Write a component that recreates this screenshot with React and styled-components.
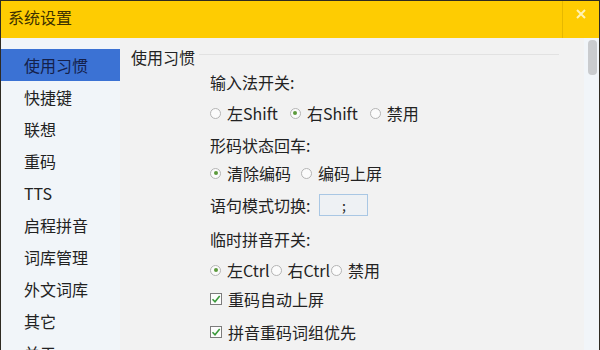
import React from 'react';
import styled, { createGlobalStyle } from 'styled-components';

const Global = createGlobalStyle`
  html, body {
    margin: 0;
    padding: 0;
    overflow: hidden;
    background: #f2f2f2;
  }
  * { box-sizing: border-box; }
`;

const Window = styled.div`
  width: 600px;
  height: 350px;
  display: flex;
  flex-direction: column;
  border: 1px solid #2e2a22;
  border-bottom: none;
  font-family: "Noto Sans CJK SC", "Noto Sans", sans-serif;
  color: #1e1e1e;
  overflow: hidden;
`;

const TitleBar = styled.div`
  height: 37px;
  flex: none;
  display: flex;
  align-items: stretch;
  background: #fecc02;
`;

const Title = styled.div`
  flex: 1;
  padding-left: 7px;
  font-size: 16px;
  line-height: 32px;
  color: #3b3000;
`;

const CloseButton = styled.div`
  width: 37px;
  border-left: 1px solid #e6b800;
  display: flex;
  justify-content: center;
  padding-top: 8px;
`;

const Body = styled.div`
  flex: 1;
  display: flex;
  min-height: 0;
`;

const Sidebar = styled.div`
  width: 119px;
  flex: none;
  background: #f1f5f9;
  padding-top: 11px;
`;

const NavItem = styled.div`
  height: 32px;
  padding-left: 23px;
  font-size: 16px;
  line-height: 32px;
  background: ${p => (p.$active ? '#3b72d4' : 'transparent')};
  color: ${p => (p.$active ? '#14204a' : '#222')};
`;

const Content = styled.div`
  flex: 1;
  background: #f2f2f2;
  padding: 9px 25px 0 11px;
`;

const GroupHeader = styled.div`
  display: flex;
  align-items: flex-start;
  height: 20px;
`;

const GroupTitle = styled.span`
  font-size: 16px;
  line-height: 20px;
  padding-right: 4px;
  color: #222;
`;

const GroupLine = styled.div`
  flex: 1;
  height: 1px;
  margin-top: 7px;
  background: #e2e2e2;
`;

const Options = styled.div`
  padding-left: 79px;
  display: flex;
  flex-direction: column;
`;

const Row = styled.div`
  height: ${p => p.$h}px;
  display: flex;
  align-items: center;
  gap: ${p => p.$gap || 0}px;
  font-size: 16px;
  color: #222;
  white-space: nowrap;
`;

const Choice = styled.label`
  display: flex;
  align-items: center;
  gap: ${p => p.$gap ?? 6}px;
`;

const RadioDot = styled.span`
  width: 11px;
  height: 11px;
  border-radius: 50%;
  border: 1px solid #b4b4b4;
  background: #fbfbfb;
  display: flex;
  align-items: center;
  justify-content: center;
  &::after {
    content: '';
    width: 4px;
    height: 4px;
    border-radius: 50%;
    background: ${p => (p.$on ? '#5c9a3c' : 'transparent')};
  }
`;

const Box = styled.span`
  width: 12px;
  height: 12px;
  border: 1px solid #7c7c7c;
  background: #fdfdfd;
  display: flex;
  align-items: center;
  justify-content: center;
`;

const KeyInput = styled.div`
  width: 49px;
  height: 22px;
  margin-left: 9px;
  border: 1px solid #a9c7e4;
  background: #eef1f4;
  display: flex;
  align-items: center;
  justify-content: center;
  font-size: 14px;
`;

const Scrollbar = styled.div`
  width: 15px;
  flex: none;
  background: #f1f5f9;
  padding: 2px 2px 0 4px;
`;

const Thumb = styled.div`
  height: 35px;
  border-radius: 4px;
  background: #c9cbce;
`;

const Radio = ({ on, gap, children }) => (
  <Choice $gap={gap}>
    <RadioDot $on={on} />
    {children}
  </Choice>
);

const Check = ({ children }) => (
  <Choice>
    <Box>
      <svg width="10" height="10" viewBox="0 0 10 10">
        <path d="M1.5 5.2 L4 7.8 L8.7 2" fill="none" stroke="#3b9a3b" strokeWidth="1.6" />
      </svg>
    </Box>
    {children}
  </Choice>
);

const nav = ['使用习惯', '快捷键', '联想', '重码', 'TTS', '启程拼音', '词库管理', '外文词库', '其它', '关于'];

export default function App() {
  return (
    <>
      <Global />
      <Window>
        <TitleBar>
          <Title>系统设置</Title>
          <CloseButton>
            <svg width="10" height="10" viewBox="0 0 10 10">
              <path d="M1 1 L9 9 M9 1 L1 9" stroke="#fff3b4" strokeWidth="2" />
            </svg>
          </CloseButton>
        </TitleBar>
        <Body>
          <Sidebar>
            {nav.map((n, i) => (
              <NavItem key={n} $active={i === 0}>{n}</NavItem>
            ))}
          </Sidebar>
          <Content>
            <GroupHeader>
              <GroupTitle>使用习惯</GroupTitle>
              <GroupLine />
            </GroupHeader>
            <Options>
              <Row $h={30}>输入法开关:</Row>
              <Row $h={32} $gap={12}>
                <Radio>左Shift</Radio>
                <Radio on>右Shift</Radio>
                <Radio>禁用</Radio>
              </Row>
              <Row $h={32}>形码状态回车:</Row>
              <Row $h={24} $gap={10}>
                <Radio on>清除编码</Radio>
                <Radio>编码上屏</Radio>
              </Row>
              <Row $h={40}>
                语句模式切换:
                <KeyInput>;</KeyInput>
              </Row>
              <Row $h={28}>临时拼音开关:</Row>
              <Row $h={34} $gap={1}>
                <Radio on>左Ctrl</Radio>
                <Radio>右Ctrl</Radio>
                <Radio>禁用</Radio>
              </Row>
              <Row $h={24}>
                <Check>重码自动上屏</Check>
              </Row>
              <Row $h={42}>
                <Check>拼音重码词组优先</Check>
              </Row>
            </Options>
          </Content>
          <Scrollbar>
            <Thumb />
          </Scrollbar>
        </Body>
      </Window>
    </>
  );
}
